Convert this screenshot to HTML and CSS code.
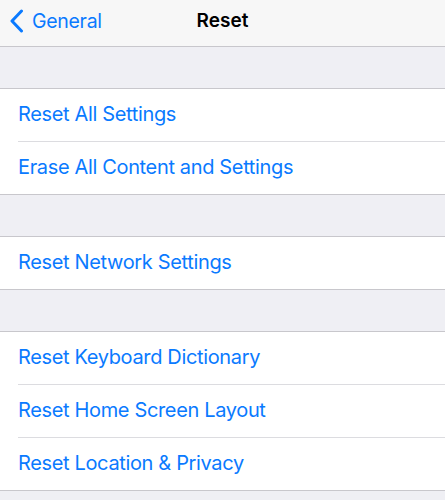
FILE: index.html
```html
<!DOCTYPE html>
<html>
<head>
<meta charset="utf-8">
<link rel="stylesheet" href="styles.css">
</head>
<body>
<div class="screen">
  <header class="nav">
    <div class="back">
      <svg class="chev" width="15" height="24" viewBox="0 0 15 24"><path d="M12.5 2 L3 12 L12.5 22" fill="none" stroke="#0a7aff" stroke-width="3" stroke-linecap="round" stroke-linejoin="round"/></svg>
      <span class="back-label">General</span>
    </div>
    <div class="title">Reset</div>
  </header>
  <div class="spacer"></div>
  <ul class="group">
    <li class="row">Reset All Settings</li>
    <li class="row">Erase All Content and Settings</li>
  </ul>
  <div class="spacer"></div>
  <ul class="group">
    <li class="row">Reset Network Settings</li>
  </ul>
  <div class="spacer"></div>
  <ul class="group">
    <li class="row">Reset Keyboard Dictionary</li>
    <li class="row">Reset Home Screen Layout</li>
    <li class="row">Reset Location &amp; Privacy</li>
  </ul>
</div>
</body>
</html>
```
FILE: styles.css
```css
* { box-sizing: border-box; }
html, body { margin: 0; padding: 0; }
body {
  background: #efeff4;
  font-family: Inter, "Liberation Sans", Arial, sans-serif;
  width: 445px;
  height: 500px;
  overflow: hidden;
}
.screen { display: flex; flex-direction: column; }
.nav {
  position: relative;
  height: 47px;
  background: #f7f7f7;
  border-bottom: 1px solid #c8c7cc;
  display: flex;
  align-items: center;
  justify-content: center;
  padding-bottom: 5px;
}
.back {
  position: absolute;
  left: 9px;
  top: 0;
  height: 42px;
  display: flex;
  align-items: center;
  gap: 8px;
  color: #0a7aff;
}
.chev { display: block; }
.back-label { font-size: 19.5px; letter-spacing: -0.3px; }
.title {
  font-size: 19px;
  font-weight: 600;
  color: #000;
}
.spacer { height: 41px; }
.group {
  list-style: none;
  margin: 0;
  padding: 0;
  background: #fff;
  border-top: 1px solid #c8c7cc;
  border-bottom: 1px solid #c8c7cc;
}
.row {
  height: 53px;
  margin-left: 18px;
  padding-bottom: 2px;
  display: flex;
  align-items: center;
  font-size: 20px;
  color: #0a7aff;
  letter-spacing: -0.35px;
  border-bottom: 1px solid #dcdce0;
}
.row:last-child { height: 52px; border-bottom: none; }
```
